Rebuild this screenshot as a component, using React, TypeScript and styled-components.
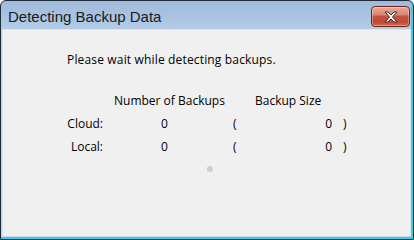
import React from 'react';
import styled, { createGlobalStyle } from 'styled-components';

const GlobalStyle = createGlobalStyle`
  html, body {
    margin: 0;
    padding: 0;
    background: #ffffff;
  }
  body {
    font-family: "Liberation Sans", Arial, sans-serif;
  }
`;

const Window = styled.div`
  width: 414px;
  height: 240px;
  box-sizing: border-box;
  border: 1px solid #1f2b38;
  border-radius: 6px 6px 0 0;
  background: linear-gradient(to bottom, #9fbadb 0px, #b4cce7 30px, #b9d1ea 100%);
  box-shadow: inset -2px -2px 0 #3ccbeb;
  display: flex;
  flex-direction: column;
  padding: 0 2px 2px 1px;
  overflow: hidden;
`;

const TitleBar = styled.div`
  height: 28px;
  display: flex;
  align-items: center;
  justify-content: space-between;
  padding: 0 1px 0 6px;
`;

const Title = styled.div`
  font-size: 15px;
  color: #1a1a1a;
  padding-top: 2px;
`;

const CloseButton = styled.button`
  width: 39px;
  height: 21px;
  margin-top: 3px;
  box-sizing: border-box;
  border: 1px solid #6e2419;
  border-radius: 4px;
  background: linear-gradient(to bottom, #e8aa9a 0%, #d98672 40%, #c2533f 50%, #c04a36 80%, #d56a4f 100%);
  box-shadow: inset 0 0 0 1px rgba(255, 255, 255, 0.35);
  display: flex;
  align-items: center;
  justify-content: center;
  padding: 0;
`;

const Body = styled.div`
  flex: 1;
  background: #f0f0f0;
  border: 1px solid #dbe6f2;
  border-bottom-color: #c9dcee;
  padding: 22px 0 0 64px;
  font-family: "Open Sans", "Liberation Sans", sans-serif;
  font-size: 12px;
  color: #000;
`;

const Message = styled.div`
  line-height: 15px;
  letter-spacing: 0.16px;
`;

const Table = styled.div`
  margin-top: 22px;
  margin-left: -8px;
  display: grid;
  grid-template-columns: 44px 128px 10px 91px 17px;
  grid-auto-rows: 23px;
  align-items: center;
  line-height: 15px;
`;

const Cell = styled.div<{ $align?: 'left' | 'right'; $indent?: number }>`
  text-align: ${(p) => p.$align ?? 'left'};
  padding-left: ${(p) => p.$indent ?? 0}px;
  white-space: nowrap;
`;

const Spinner = styled.div`
  display: flex;
  justify-content: center;
  width: 286px;
  margin-top: 8px;
`;

const Dot = styled.div`
  width: 6px;
  height: 6px;
  border-radius: 50%;
  background: #cfcfcf;
`;

const rows = [
  { label: 'Cloud:', count: 0, size: 0 },
  { label: 'Local:', count: 0, size: 0 },
];

export default function App() {
  return (
    <>
      <GlobalStyle />
      <Window>
        <TitleBar>
          <Title>Detecting Backup Data</Title>
          <CloseButton aria-label="Close">
            <svg width="16" height="12" viewBox="0 0 16 12">
              <path
                d="M2 1 L5 1 L8 4 L11 1 L14 1 L9.5 6 L14 11 L11 11 L8 8 L5 11 L2 11 L6.5 6 Z"
                fill="#ffffff"
                stroke="#4a2a26"
                strokeWidth="1"
                strokeLinejoin="round"
              />
            </svg>
          </CloseButton>
        </TitleBar>
        <Body>
          <Message>Please wait while detecting backups.</Message>
          <Table>
            <Cell />
            <Cell $indent={11}>Number of Backups</Cell>
            <Cell />
            <Cell $indent={14}>Backup Size</Cell>
            <Cell />
            {rows.map((r) => (
              <React.Fragment key={r.label}>
                <Cell $align="right">{r.label}</Cell>
                <Cell $indent={58}>{r.count}</Cell>
                <Cell $indent={2}>(</Cell>
                <Cell $align="right">{r.size}</Cell>
                <Cell $indent={11}>)</Cell>
              </React.Fragment>
            ))}
          </Table>
          <Spinner>
            <Dot />
          </Spinner>
        </Body>
      </Window>
    </>
  );
}
